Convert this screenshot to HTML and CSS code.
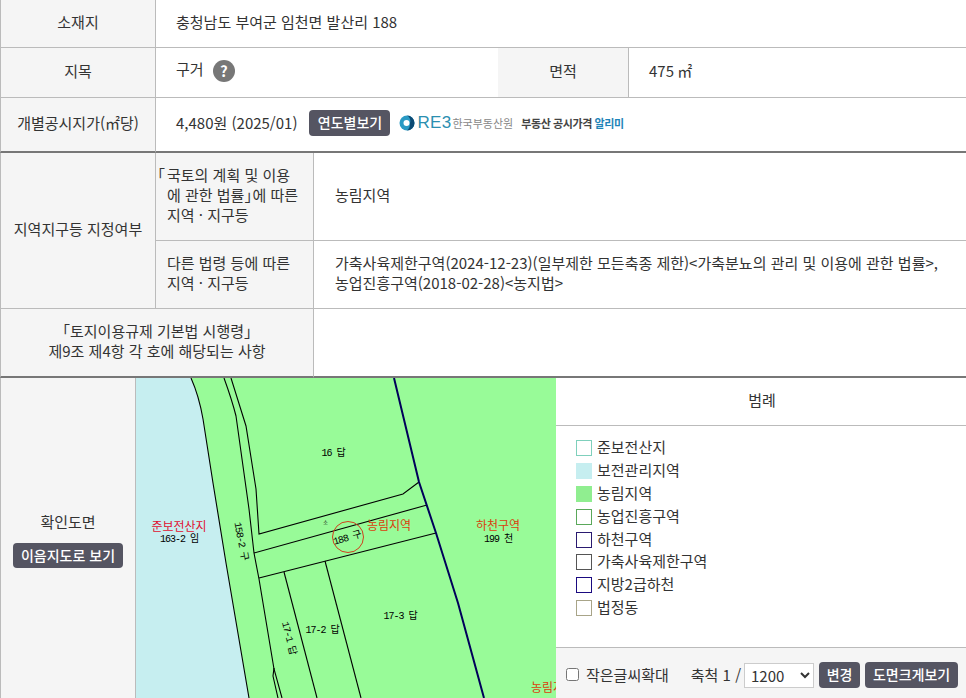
FILE: index.html
```html
<!DOCTYPE html>
<html lang="ko">
<head>
  <meta charset="UTF-8">
  <meta name="viewport" content="width=device-width, initial-scale=1.0">
  <title>토지이용계획 열람</title>
  <link rel="stylesheet" href="styles.css">
</head>
<body>
  <!-- 기본 정보 -->
  <table class="info info-top">
    <colgroup>
      <col class="col-a"><col class="col-b"><col class="col-c"><col class="col-d">
    </colgroup>
    <tr class="row-addr">
      <th class="first">소재지</th>
      <td colspan="3" class="val">충청남도 부여군 임천면 발산리 188</td>
    </tr>
    <tr class="row-kind">
      <th class="first">지목</th>
      <td class="val">구거 <span class="help">?</span></td>
      <th>면적</th>
      <td class="val">475 ㎡</td>
    </tr>
    <tr class="row-price thick">
      <th class="first">개별공시지가(㎡당)</th>
      <td colspan="3" class="val">
        <div class="price">
          <span>4,480원 (2025/01)</span>
          <button class="btn btn-year">연도별보기</button>
          <span class="reb">
            <svg class="reb-mark" width="16" height="16" viewBox="0 0 16 16">
              <circle cx="8" cy="8" r="7.5" fill="#2a9ac4"/>
              <path d="M8 .5 A7.5 7.5 0 0 1 8 15.5 A9 9 0 0 0 11 8 A6 6 0 0 0 8 .5Z" fill="#0b4a74"/>
              <circle cx="7.5" cy="8" r="3" fill="#fff"/>
            </svg>
            <span class="reb-name">RE3</span>
            <span class="reb-org">한국부동산원</span>
            <b class="reb-title">부동산 공시가격 <em>알리미</em></b>
          </span>
        </div>
      </td>
    </tr>
  </table>

  <!-- 지역지구 -->
  <table class="info info-zone">
    <colgroup>
      <col class="col-a"><col class="col-e"><col class="col-f">
    </colgroup>
    <tr class="row-law">
      <th rowspan="2" class="first">지역지구등 지정여부</th>
      <th class="law"><span class="open">「</span>국토의 계획 및 이용<br><span class="law-in">에 관한 법률<span class="close">」</span>에 따른</span><br><span class="law-in">지역 · 지구등</span></th>
      <td class="val wide">농림지역</td>
    </tr>
    <tr class="row-other">
      <th class="law"><span class="law-in">다른 법령 등에 따른</span><br><span class="law-in">지역 · 지구등</span></th>
      <td class="val wide">가축사육제한구역(2024-12-23)(일부제한 모든축종 제한)&lt;가축분뇨의 관리 및 이용에 관한 법률&gt;,<br>농업진흥구역(2018-02-28)&lt;농지법&gt;</td>
    </tr>
    <tr class="row-rule thick">
      <th colspan="2" class="first">「토지이용규제 기본법 시행령」<br>제9조 제4항 각 호에 해당되는 사항</th>
      <td class="val wide"></td>
    </tr>
  </table>

  <!-- 확인도면 -->
  <div class="plan">
    <div class="plan-side">
      <div>확인도면</div>
      <button class="btn btn-map">이음지도로 보기</button>
    </div>

    <svg class="map" width="420" height="320" viewBox="136 378 420 320">
      <rect x="136" y="378" width="420" height="320" fill="#98fb98"/>
      <path d="M136 378 L191 378 Q199 396 203 419 L213 483 L226 563 L249 698 L136 698Z" fill="#c6eef0"/>
      <g class="parcel">
        <path d="M191 378 Q199 396 203 419 L213 483 L226 563 L249 698"/>
        <path d="M224 378 Q232 400 236 416 L249 509 L254 553 L259 579 L274 669 L282 698"/>
        <path d="M231 378 L246 426 L256 489 L259 534 L403 494 L419 482"/>
        <path d="M254 553 L427 505"/>
        <path d="M259 578 L436 533"/>
        <path d="M284 572 L317 698"/>
        <path d="M325 561 L361 698"/>
        <path d="M274 668 L273 676 L278 698"/>
      </g>
      <path class="river" d="M394 378 L419 482 L436 533 L458 603 L484 698"/>
      <circle class="mark" cx="348" cy="537" r="15.5"/>
      <text class="zone zone-red" x="179" y="531">준보전산지</text>
      <text class="lot" x="179" y="542">163-2 임</text>
      <text class="zone" x="389" y="530">농림지역</text>
      <text class="zone" x="498" y="530">하천구역</text>
      <text class="lot" x="498" y="542">199 천</text>
      <text class="zone" x="553" y="692">농림지역</text>
      <text class="lot" x="333" y="456">16 답</text>
      <text class="lot" x="400" y="619">17-3 답</text>
      <text class="lot" x="322" y="633">17-2 답</text>
      <text class="lot" transform="translate(241 541) rotate(79)" y="3">158-2 구</text>
      <text class="lot" transform="translate(289 638) rotate(76)" y="3">17-1 답</text>
      <text class="lot" transform="translate(347 538) rotate(-16)" y="3">188 구</text>
      <text class="lot tiny" x="325" y="524">소</text>
    </svg>

    <div class="legend">
      <div class="legend-head">범례</div>
      <ul class="legend-list">
        <li><i class="sw sw-1"></i>준보전산지</li>
        <li><i class="sw sw-2"></i>보전관리지역</li>
        <li><i class="sw sw-3"></i>농림지역</li>
        <li><i class="sw sw-4"></i>농업진흥구역</li>
        <li><i class="sw sw-5"></i>하천구역</li>
        <li><i class="sw sw-6"></i>가축사육제한구역</li>
        <li><i class="sw sw-7"></i>지방2급하천</li>
        <li><i class="sw sw-8"></i>법정동</li>
      </ul>
      <div class="legend-foot">
        <label class="zoom-text"><input type="checkbox">작은글씨확대</label>
        <span class="scale-label">축척 1 /</span>
        <select class="scale"><option>1200</option></select>
        <button class="btn btn-change">변경</button>
        <button class="btn btn-big">도면크게보기</button>
      </div>
    </div>
  </div>
</body>
</html>
```

FILE: styles.css
```css
html, body {
  margin: 0;
  height: 698px;
  overflow: hidden;
}

body {
  font-family: "Noto Sans CJK KR", "Noto Sans", sans-serif;
  font-size: 15px;
  color: #333;
  background: #fff;
}

.info {
  width: 966px;
  table-layout: fixed;
  border-collapse: separate;
  border-spacing: 0;
}

.info th,
.info td {
  box-sizing: border-box;
  padding: 0 0 4px;
  border-bottom: 1px solid #bbb;
  font-weight: normal;
  line-height: 20px;
}

.info th {
  background: #f5f5f5;
  border-right: 1px solid #bbb;
  text-align: center;
}

.info th.first {
  border-left: 1px solid #bbb;
}

.info .thick th,
.info .thick td {
  border-bottom: 2px solid #777;
}

.col-a { width: 156px; }
.col-b { width: 342px; }
.col-c { width: 131px; }
.col-d { width: 337px; }
.col-e { width: 158px; }
.col-f { width: 652px; }

.row-addr { height: 48px; }
.row-kind { height: 50px; }
.row-price { height: 55px; }
.row-law { height: 88px; }
.row-other { height: 68px; }
.row-rule { height: 69px; }

.val {
  padding-left: 20px !important;
}

.wide {
  padding-left: 21px !important;
}

.info th.law {
  text-align: left;
  padding-left: 1px;
}

.law-in {
  padding-left: 10px;
}

.open {
  margin-left: -7px;
  letter-spacing: 2px;
}

.close {
  letter-spacing: -7px;
}

.help {
  display: inline-block;
  width: 22px;
  height: 22px;
  margin-left: 5px;
  border-radius: 50%;
  background: #777;
  color: #fff;
  font-weight: bold;
  line-height: 22px;
  text-align: center;
  vertical-align: middle;
}

.price {
  display: flex;
  align-items: center;
}

.btn {
  box-sizing: border-box;
  padding: 0 0 2px;
  border: none;
  border-radius: 4px;
  background: #555562;
  color: #fff;
  font-family: inherit;
  font-size: 14px;
  font-weight: 500;
  line-height: 20px;
  cursor: pointer;
}

.btn-year {
  width: 81px;
  height: 26px;
  margin-left: 12px;
}

.reb {
  display: flex;
  align-items: center;
  margin-left: 9px;
  font-size: 11px;
}

.reb-name {
  margin-left: 2px;
  font-family: "Liberation Sans", sans-serif;
  font-size: 17px;
  letter-spacing: 0.3px;
  color: #2b8fb0;
}

.reb-org {
  margin-left: 1px;
  color: #888;
}

.reb-title {
  margin-left: 8px;
  letter-spacing: -0.4px;
  color: #444;
}

.reb-title em {
  font-style: normal;
  color: #1f84b8;
}

.plan {
  display: flex;
  height: 320px;
}

.plan-side {
  box-sizing: border-box;
  flex: 0 0 136px;
  display: flex;
  flex-direction: column;
  align-items: center;
  justify-content: center;
  gap: 11px;
  padding-top: 3px;
  background: #f5f5f5;
  border-left: 1px solid #bbb;
  border-right: 1px solid #bbb;
}

.btn-map {
  width: 110px;
  height: 25px;
}

.map {
  flex: 0 0 420px;
  display: block;
}

.parcel path {
  fill: none;
  stroke: #000;
  stroke-width: 1.1;
}

.river {
  fill: none;
  stroke: #00005a;
  stroke-width: 2;
}

.mark {
  fill: none;
  stroke: #d0401c;
  stroke-width: 1;
}

.zone {
  font-size: 12px;
  fill: #d8400c;
  text-anchor: middle;
}

.zone-red {
  fill: #e01030;
}

.lot {
  font-family: "Liberation Mono", "Noto Sans CJK KR", monospace;
  font-size: 10px;
  letter-spacing: -1px;
  fill: #000;
  text-anchor: middle;
}

.tiny {
  font-size: 5px;
}

.legend {
  flex: 1;
  display: flex;
  flex-direction: column;
}

.legend-head {
  height: 47px;
  padding-left: 2px;
  line-height: 43px;
  text-align: center;
  border-bottom: 1px solid #bbb;
}

.legend-list {
  flex: 1;
  margin: 0;
  padding: 11px 0 0 20px;
  list-style: none;
}

.legend-list li {
  display: flex;
  align-items: flex-start;
  height: 22.9px;
  line-height: 19px;
}

.sw {
  box-sizing: border-box;
  width: 16px;
  height: 16px;
  margin: 3px 5px 0 0;
  border: 1px solid #000;
}

.sw-1 { border-color: #7fd0bc; }
.sw-2 { background: #c6eef0; border-color: #c6eef0; }
.sw-3 { background: #90ee90; border-color: #90ee90; }
.sw-4 { border-color: #5aa85a; }
.sw-5 { border-color: #2a1a70; }
.sw-6 { border-color: #555; }
.sw-7 { border-color: #1a0a80; }
.sw-8 { border-color: #a8a488; }

.legend-foot {
  box-sizing: border-box;
  display: flex;
  align-items: center;
  height: 51px;
  padding: 4px 0 0 10px;
  background: #f5f5f5;
  border-top: 1px solid #bbb;
}

.zoom-text {
  display: flex;
  align-items: center;
  gap: 7px;
  margin-bottom: 2px;
}

.zoom-text input {
  width: 13px;
  height: 13px;
  margin: 0;
}

.scale-label {
  margin-left: 22px;
  padding-bottom: 2px;
}

.scale {
  box-sizing: border-box;
  width: 70px;
  height: 25px;
  margin-left: 3px;
  padding-left: 2px;
  border: 1px solid #ccc;
  background: #fff;
  color: #333;
  font-family: inherit;
  font-size: 15px;
}

.btn-change {
  width: 41px;
  height: 26px;
  margin-left: 5px;
}

.btn-big {
  width: 93px;
  height: 26px;
  margin-left: 5px;
}
```
